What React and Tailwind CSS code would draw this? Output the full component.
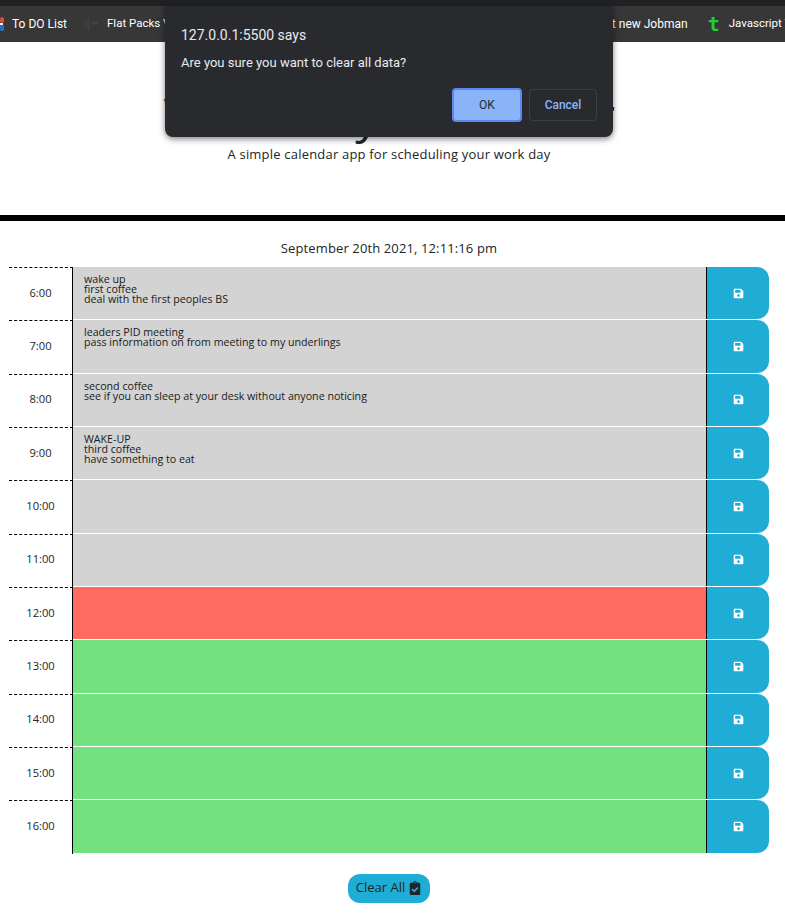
import { FaSave, FaClipboardCheck } from "react-icons/fa";

const hours = [
  { time: "6:00", color: "bg-[#d3d3d3]", text: "wake up\nfirst coffee\ndeal with the first peoples BS" },
  { time: "7:00", color: "bg-[#d3d3d3]", text: "leaders PID meeting\npass information on from meeting to my underlings" },
  { time: "8:00", color: "bg-[#d3d3d3]", text: "second coffee\nsee if you can sleep at your desk without anyone noticing" },
  { time: "9:00", color: "bg-[#d3d3d3]", text: "WAKE-UP\nthird coffee\nhave something to eat" },
  { time: "10:00", color: "bg-[#d3d3d3]", text: "" },
  { time: "11:00", color: "bg-[#d3d3d3]", text: "" },
  { time: "12:00", color: "bg-[#ff6b60]", text: "" },
  { time: "13:00", color: "bg-[#73e17f]", text: "" },
  { time: "14:00", color: "bg-[#73e17f]", text: "" },
  { time: "15:00", color: "bg-[#73e17f]", text: "" },
  { time: "16:00", color: "bg-[#73e17f]", text: "" },
];

const HourRow = ({ time, color, text }) => (
  <div className="flex h-[53.33px]">
    <div className="w-[64px] pb-[2px] flex items-center justify-center border-t border-r border-black [border-top-style:dashed] text-[11.2px] text-[#212529]">
      {time}
    </div>
    <div className={`flex-1 ${color} mb-[1px] pl-[11px] pt-[7px] text-[10.67px] leading-[10px] text-[#1a1a1a] whitespace-pre`}>
      {text}
    </div>
    <button className="w-[63px] mb-[1px] bg-[#20add5] border-l border-black rounded-r-[12px] flex items-center justify-center text-white text-[11px]">
      <FaSave />
    </button>
  </div>
);

const App = () => (
  <div className="h-[915px] overflow-hidden bg-white relative font-['Open_Sans',sans-serif] text-[#212529]">
    {/* browser chrome */}
    <div className="h-[6px] bg-[#202124]" />
    <div className="h-[36px] bg-[#373737] flex items-center text-[12px] text-white font-['Roboto',sans-serif] whitespace-nowrap overflow-hidden">
      <svg className="mr-[8px]" width="4" height="14" viewBox="0 0 4 14">
        <rect x="0" y="0" width="4" height="6" rx="2" fill="#e0483c" />
        <rect x="0" y="6" width="3" height="2" fill="#f2f2f2" />
        <rect x="0" y="8" width="4" height="6" rx="1" fill="#2b6cc4" />
      </svg>
      <span>To DO List</span>
      <svg className="ml-[17px] mr-[8px]" width="15" height="14" viewBox="0 0 15 14">
        <path d="M1 5v4M3 3v8" stroke="#474747" strokeWidth="1" />
        <path d="M5 0v14" stroke="#5a4040" strokeWidth="1" />
        <path d="M8 6h6" stroke="#454545" strokeWidth="3" />
      </svg>
      <span className="text-[11.5px]">Flat Packs Videos</span>
      <span className="ml-auto">Get new Jobman</span>
      <span className="ml-[20px] mr-[9px] text-[#22cc33] text-[20px] font-bold font-['DejaVu_Sans_Mono',monospace] leading-none">t</span>
      <span className="text-[11.5px] -mr-[44px]">Javascript Tutorials</span>
    </div>

    {/* header */}
    <header className="h-[179px] border-b-[6px] border-black text-center pr-[7px]">
      <h1 className="pt-[45px] text-[48px] leading-[56px] text-[#212529]">Work Day Scheduler</h1>
      <p className="mt-[2px] text-[13px] leading-[18px] tracking-[0.2px]">A simple calendar app for scheduling your work day</p>
    </header>

    <p className="mt-[18px] h-[28px] text-center text-[13px] leading-[18px] tracking-[0.12px] pr-[7px]">September 20th 2021, 12:11:16 pm</p>

    {/* planner */}
    <div className="pl-[9px] pr-[16px]">
      {hours.map((h) => (
        <HourRow key={h.time} {...h} />
      ))}
    </div>

    <div className="mt-[20px] flex justify-center pr-[7px]">
      <button className="h-[29px] w-[82px] rounded-[12px] bg-[#20add5] text-[13px] flex items-center justify-center gap-[3px] text-[#212529]">
        Clear All <FaClipboardCheck className="text-[14px]" />
      </button>
    </div>

    {/* confirm dialog */}
    <div className="absolute left-[165px] top-[6px] w-[448px] h-[131px] bg-[#292a2d] rounded-b-[8px] shadow-[0_2px_6px_rgba(0,0,0,0.5)] font-['Roboto',sans-serif] pl-[16px] pr-[16px]">
      <p className="pt-[19px] text-[14px] leading-[20px] text-[#e8eaed]">127.0.0.1:5500 says</p>
      <p className="mt-[9px] text-[13px] leading-[18px] text-[#e8eaed]">Are you sure you want to clear all data?</p>
      <div className="mt-[16px] flex justify-end gap-[7px]">
        <button className="w-[70px] h-[34px] rounded-[4px] bg-[#8ab4f8] border-2 border-[#5f86ee] text-[12px] text-[#292a2d]">OK</button>
        <button className="w-[68px] h-[32px] mt-[1px] rounded-[4px] border border-[#3c4043] text-[12px] font-medium text-[#8ab4f8]">Cancel</button>
      </div>
    </div>
  </div>
);

export default App;
